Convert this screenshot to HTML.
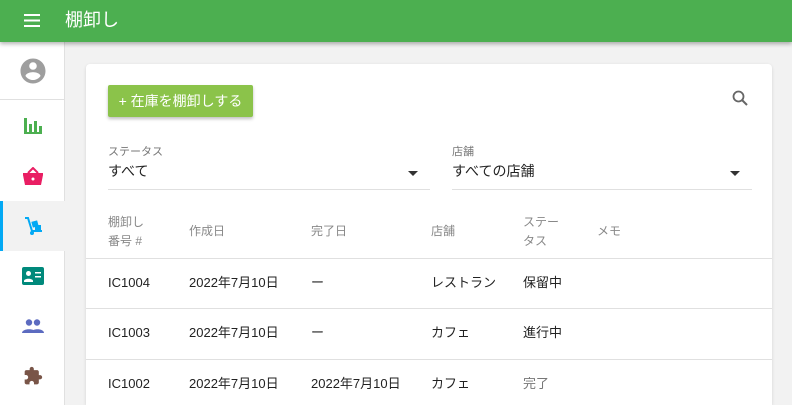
<!DOCTYPE html>
<html><head><meta charset="utf-8"><style>
*{box-sizing:border-box;margin:0;padding:0}
html{width:792px;height:405px;overflow:hidden}
body{width:792px;height:405px;overflow:hidden;background:#f2f2f2;font-family:"Liberation Sans","Noto Sans CJK JP",sans-serif;position:relative;color:#222}
.hdr{position:absolute;left:0;top:0;width:792px;height:42px;background:#4caf50;box-shadow:0 2px 4px rgba(0,0,0,.3);z-index:3}
.hdr .t{position:absolute;left:65px;top:8px;color:#fff;font-size:18px;line-height:24px}
.side{position:absolute;left:0;top:42px;width:65px;height:363px;background:#fff;border-right:1px solid #e0e0e0}
.ic{position:absolute;left:0;width:65px;height:50px;display:flex;align-items:center;justify-content:center}
.card{position:absolute;left:86px;top:64px;width:686px;height:341px;background:#fff;border-radius:4px 4px 0 0;box-shadow:0 1px 3px rgba(0,0,0,.12)}
.btn{position:absolute;left:22px;top:21px;width:145px;height:32px;background:#8bc34a;color:#fff;font-size:14px;line-height:32px;text-align:center;border-radius:2px;box-shadow:0 2px 3px rgba(0,0,0,.25)}
.sel{position:absolute;top:80px;border-bottom:1px solid #e0e0e0;height:46px}
.sel .l{font-size:11px;color:#777;position:absolute;top:1px;line-height:14px}
.sel .v{font-size:14px;position:absolute;top:18px;line-height:18px}
.sel .a{position:absolute;right:12px;top:27px;border-left:5px solid transparent;border-right:5px solid transparent;border-top:5px solid #333}
.th{position:absolute;font-size:12px;color:#888;line-height:19px}
.row{position:absolute;left:0;width:686px;height:50px;border-top:1px solid #e0e0e0;font-size:13px}
.row span{position:absolute;top:15px;line-height:18px}
</style></head><body>
<div class="hdr">
<svg style="position:absolute;left:24px;top:14px" width="16" height="13"><rect y="0" width="16" height="2" fill="#fff"/><rect y="5.5" width="16" height="2" fill="#fff"/><rect y="11" width="16" height="2" fill="#fff"/></svg>
<div class="t">棚卸し</div></div>
<div class="side">
<div style="position:absolute;left:0;top:57px;width:65px;border-top:1px solid #e0e0e0"></div>
<svg style="position:absolute;left:18px;top:14px" width="30" height="30" viewBox="0 0 24 24"><path fill="#9e9e9e" d="M12 2C6.48 2 2 6.48 2 12s4.48 10 10 10 10-4.48 10-10S17.52 2 12 2zm0 3c1.66 0 3 1.34 3 3s-1.34 3-3 3-3-1.34-3-3 1.34-3 3-3zm0 14.2c-2.5 0-4.71-1.28-6-3.22.03-1.99 4-3.08 6-3.08 1.99 0 5.97 1.09 6 3.08-1.29 1.94-3.5 3.22-6 3.22z"/></svg>
<div class="ic" style="top:59px"><svg width="18" height="16"><rect x="0" y="0" width="3" height="16" fill="#4caf50"/><rect x="0" y="14" width="18" height="2" fill="#4caf50"/><rect x="5" y="6" width="3" height="9" fill="#4caf50"/><rect x="10" y="3" width="3" height="12" fill="#4caf50"/><rect x="15" y="8" width="3" height="7" fill="#4caf50"/></svg></div>
<div class="ic" style="top:109px"><svg width="20" height="18" viewBox="0 0 20 18"><path fill="#e91e63" d="M0 6h20v2l-2 10H2L0 8z"/><path d="M5 6l5-5 5 5" stroke="#e91e63" stroke-width="2" fill="none"/><circle cx="10" cy="12" r="1.5" fill="#fff"/></svg></div>
<div class="ic" style="top:159px;background:#f2f2f2;border-left:3px solid #03a9f4"><svg width="20" height="20" viewBox="0 0 20 20"><path d="M1 2h3l4 13h10" stroke="#03a9f4" stroke-width="2" fill="none"/><rect x="8" y="5" width="6" height="6" fill="#03a9f4" transform="rotate(-15 11 8)"/><rect x="11" y="9" width="6" height="5" fill="#03a9f4"/><circle cx="8" cy="17" r="2" fill="#03a9f4"/></svg></div>
<div class="ic" style="top:209px"><svg width="22" height="18"><rect width="22" height="18" rx="2" fill="#00897b"/><circle cx="6.5" cy="6.5" r="2.5" fill="#fff"/><path d="M2 14c0-3 9-3 9 0v1H2z" fill="#fff"/><rect x="13" y="5" width="6" height="1.5" fill="#fff"/><rect x="13" y="9" width="6" height="1.5" fill="#fff"/></svg></div>
<div class="ic" style="top:259px"><svg width="22" height="14"><circle cx="7" cy="3.5" r="3.2" fill="#5c6bc0"/><circle cx="15" cy="3.5" r="3.2" fill="#5c6bc0"/><path d="M0 14c0-5 14-5 14 0z" fill="#5c6bc0"/><path d="M9 14c0-5 13-5 13 0z" fill="#5c6bc0"/></svg></div>
<div class="ic" style="top:309px"><svg width="20" height="20" viewBox="0 0 24 24"><path fill="#795548" d="M20.5 11H19V7c0-1.1-.9-2-2-2h-4V3.5C13 2.120 11.88 1 10.5 1S8 2.12 8 3.5V5H4c-1.1 0-1.99.9-1.99 2v3.8H3.5c1.49 0 2.7 1.21 2.7 2.7s-1.21 2.7-2.7 2.7H2V20c0 1.1.9 2 2 2h3.8v-1.5c0-1.49 1.21-2.7 2.7-2.7 1.49 0 2.7 1.21 2.7 2.7V22H17c1.1 0 2-.9 2-2v-4h1.5c1.38 0 2.5-1.12 2.5-2.5S21.88 11 20.5 11z"/></svg></div>
</div>
<div class="card">
<div class="btn">+ 在庫を棚卸しする</div>
<svg style="position:absolute;left:646px;top:26px" width="16" height="16" viewBox="0 0 16 16"><circle cx="6.5" cy="6.5" r="5" stroke="#666" stroke-width="1.8" fill="none"/><path d="M10 10l5 5" stroke="#666" stroke-width="2"/></svg>
<div class="sel" style="left:22px;width:322px"><div class="l">ステータス</div><div class="v">すべて</div><div class="a"></div></div>
<div class="sel" style="left:366px;width:300px"><div class="l">店舗</div><div class="v">すべての店舗</div><div class="a"></div></div>
<div class="th" style="left:22px;top:149px">棚卸し<br>番号 #</div>
<div class="th" style="left:103px;top:158px">作成日</div>
<div class="th" style="left:225px;top:158px">完了日</div>
<div class="th" style="left:345px;top:158px">店舗</div>
<div class="th" style="left:437px;top:149px">ステー<br>タス</div>
<div class="th" style="left:511px;top:158px">メモ</div>
<div class="row" style="top:194px"><span style="left:22px">IC1004</span><span style="left:103px">2022年7月10日</span><span style="left:225px">ー</span><span style="left:345px">レストラン</span><span style="left:437px">保留中</span></div>
<div class="row" style="top:244px"><span style="left:22px">IC1003</span><span style="left:103px">2022年7月10日</span><span style="left:225px">ー</span><span style="left:345px">カフェ</span><span style="left:437px">進行中</span></div>
<div class="row" style="top:295px"><span style="left:22px">IC1002</span><span style="left:103px">2022年7月10日</span><span style="left:225px">2022年7月10日</span><span style="left:345px">カフェ</span><span style="left:437px;color:#777">完了</span></div>
</div>
</body></html>
